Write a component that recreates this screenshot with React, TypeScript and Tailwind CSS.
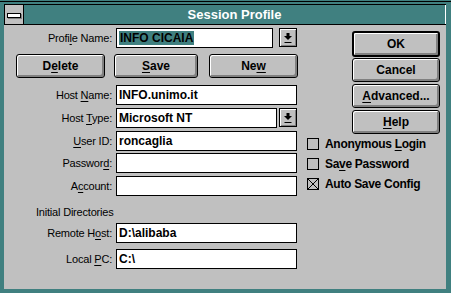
import type { ReactNode } from 'react';

const U = ({ children }: { children: ReactNode }) => (
  <span className="underline decoration-1 underline-offset-[2px]">{children}</span>
);

function Btn({ children, className = '' }: { children: ReactNode; className?: string }) {
  return (
    <div
      className={`flex items-center justify-center bg-[#c0c0c0] border-black rounded-[3px] shadow-[inset_1px_1px_0_#fff,inset_-2px_-2px_0_#808080] text-[12px] font-bold text-black ${className}`}
    >
      {children}
    </div>
  );
}

function DropBtn({ className = '' }: { className?: string }) {
  return (
    <div
      className={`w-[18px] h-[19px] border border-black bg-[#c0c0c0] shadow-[inset_1px_1px_0_#fff,inset_-1px_-1px_0_#808080] flex items-center justify-center ${className}`}
    >
      <svg width="8" height="10" viewBox="0 0 8 10">
        <rect x="2.5" y="0" width="3" height="3" fill="#000" />
        <polygon points="0,3 8,3 4,7" fill="#000" />
        <rect x="0.5" y="9" width="7" height="1" fill="#000" />
      </svg>
    </div>
  );
}

function Field({
  label,
  value,
  className = 'w-[181px]',
}: {
  label: ReactNode;
  value?: string;
  className?: string;
}) {
  return (
    <div className="flex items-center h-[20px]">
      <div className="w-[108px] text-right text-[11px] tracking-[-0.2px] text-black">{label}</div>
      <div
        className={`ml-[4px] h-[20px] border border-black bg-white flex items-center pl-[2px] text-[12px] font-bold text-black ${className}`}
      >
        {value}
      </div>
    </div>
  );
}

function Check({ children, checked = false }: { children: ReactNode; checked?: boolean }) {
  return (
    <div className="flex items-center h-[20px] ml-[7px]">
      <div className="w-[12px] h-[12px] border border-black bg-[#c0c0c0]">
        {checked && (
          <svg width="10" height="10" viewBox="0 0 10 10" className="block">
            <path d="M0 0L10 10M10 0L0 10" stroke="#000" strokeWidth="1" />
          </svg>
        )}
      </div>
      <span className="ml-[6px] text-[12px] font-bold tracking-[-0.3px] text-black">{children}</span>
    </div>
  );
}

export default function App() {
  return (
    <div className="w-[451px] h-[293px] bg-[#408080] flex flex-col font-['Liberation_Sans',Arial,sans-serif] leading-none">
      {/* frame top edge */}
      <div className="h-[4px] pt-[1px]">
        <div className="h-[1px] bg-black" />
      </div>
      <div className="flex-1 flex flex-col pl-[4px] pr-[5px] pb-[4px]">
        {/* title bar */}
        <div className="flex h-[21px] border-y border-black bg-[#408080]">
          <div className="w-[20px] border-x border-black bg-[#c0c0c0] flex items-center justify-center">
            <div className="w-[14px] h-[5px] border border-black bg-white mt-[2px] shadow-[1px_1px_0_#808080]" />
          </div>
          <div className="flex-1 flex items-center justify-center text-white font-bold text-[13px] border-r border-white">
            Session Profile
          </div>
        </div>

        {/* body */}
        <div className="flex-1 flex bg-[#c0c0c0]">
          <div className="w-[296px] flex flex-col">
            <div className="flex items-start h-[20px] mt-[3px]">
              <div className="w-[108px] h-[20px] flex items-center justify-end text-[11px] tracking-[-0.2px]">
                Profi<U>l</U>e Name:
              </div>
              <div className="ml-[4px] w-[157px] h-[20px] border border-black bg-white flex items-center pl-[2px]">
                <span className="bg-[#408080] text-black text-[12px] font-bold px-[1px] py-[1px]">INFO CICAIA</span>
              </div>
              <DropBtn className="ml-[6px]" />
            </div>

            <div className="flex mt-[6px]">
              <Btn className="ml-[12px] w-[89px] h-[24px] border">
                D<U>e</U>lete
              </Btn>
              <Btn className="ml-[9px] w-[84px] h-[24px] border">
                <U>S</U>ave
              </Btn>
              <Btn className="ml-[11px] w-[89px] h-[24px] border">
                Ne<U>w</U>
              </Btn>
            </div>

            <div className="mt-[7px]">
              <Field label={<>Host <U>N</U>ame:</>} value="INFO.unimo.it" />
            </div>
            <div className="mt-[3px] flex items-start">
              <Field label={<>Host <U>T</U>ype:</>} value="Microsoft NT" className="w-[161px]" />
              <DropBtn className="ml-[2px]" />
            </div>
            <div className="mt-[3px]">
              <Field label={<><U>U</U>ser ID:</>} value="roncaglia" />
            </div>
            <div className="mt-[2px]">
              <Field label={<>Passwor<U>d</U>:</>} />
            </div>
            <div className="mt-[3px]">
              <Field label={<>A<U>c</U>count:</>} />
            </div>

            <div className="mt-[10px] pl-[32px] text-[11px] tracking-[-0.2px] leading-[13px]">Initial Directories</div>

            <div className="mt-[4px]">
              <Field label={<>Remote H<U>o</U>st:</>} value="D:\alibaba" />
            </div>
            <div className="mt-[6px]">
              <Field label={<>Local <U>P</U>C:</>} value="C:\" />
            </div>
          </div>

          <div className="flex-1 flex flex-col">
            <Btn className="ml-[52px] mt-[6px] w-[88px] h-[26px] border-2">OK</Btn>
            <Btn className="ml-[52px] mt-[1px] w-[88px] h-[24px] border">Cancel</Btn>
            <Btn className="ml-[52px] mt-[2px] w-[88px] h-[24px] border">
              <U>A</U>dvanced...
            </Btn>
            <Btn className="ml-[52px] mt-[2px] w-[88px] h-[24px] border">
              <U>H</U>elp
            </Btn>
            <div className="mt-[0px]">
              <Check>
                Anonymous <U>L</U>ogin
              </Check>
              <Check>
                Sa<U>v</U>e Password
              </Check>
              <Check checked>Auto Save Config</Check>
            </div>
          </div>
        </div>
      </div>
    </div>
  );
}
